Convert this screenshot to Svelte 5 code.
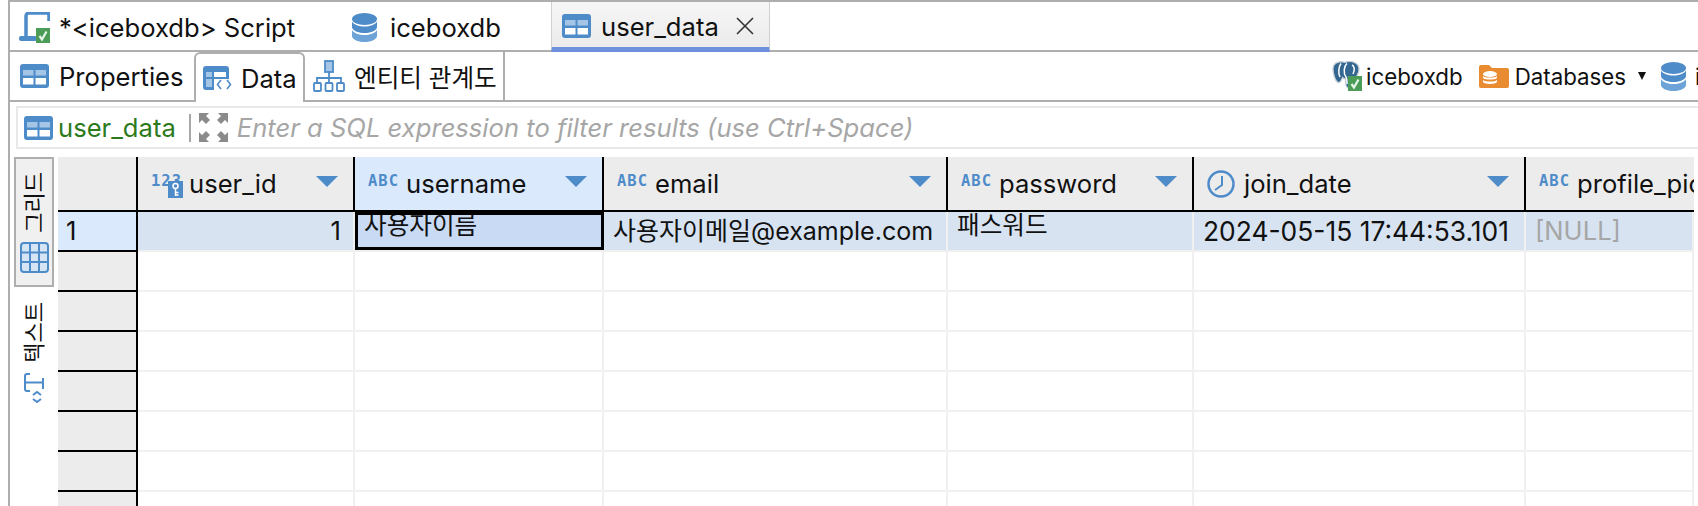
<script>
	const columns = [
		{ name: 'user_id', type: 'num' },
		{ name: 'username', type: 'abc', active: true },
		{ name: 'email', type: 'abc' },
		{ name: 'password', type: 'abc' },
		{ name: 'join_date', type: 'time' },
		{ name: 'profile_picture', type: 'abc', noSort: true }
	];
	const emptyRows = [1, 2, 3, 4, 5, 6, 7];
</script>

{#snippet tableIcon()}
	<svg class="ic-table" viewBox="0 0 29 24">
		<rect width="29" height="24" rx="3" fill="#4e8bc9" />
		<rect x="3" y="6" width="10.5" height="5.5" fill="#a5c5e6" />
		<rect x="15.5" y="6" width="10.5" height="5.5" fill="#a5c5e6" />
		<rect x="3" y="14" width="10.5" height="6.5" fill="#fff" />
		<rect x="15.5" y="14" width="10.5" height="6.5" fill="#fff" />
	</svg>
{/snippet}

{#snippet dbIcon()}
	<svg class="ic-db" viewBox="0 0 25 29">
		<ellipse cx="12.5" cy="6" rx="12.5" ry="6" fill="#4e8bc9" />
		<path d="M0 8.5c2 3.500 7 5 12.500 5s10.500-1.500 12.500-5v5.500c0 3.300-5.600 6-12.500 6S0 17.300 0 14z" fill="#4e8bc9" />
		<path d="M0 17c2 3.500 7 5 12.500 5s10.500-1.500 12.500-5v6c0 3.300-5.600 6-12.500 6S0 26.300 0 23z" fill="#6ea3d8" />
	</svg>
{/snippet}

{#snippet check()}
	<svg class="ic-check" viewBox="0 0 14 15">
		<rect width="14" height="15" fill="#4a9c56" />
		<path d="M3.500 8l2.500 3.500 4.500-8" fill="none" stroke="#e8f5ea" stroke-width="2.200" />
	</svg>
{/snippet}

{#snippet sortArrow()}
	<span class="sort"></span>
{/snippet}

<div class="window">
	<div class="editor-tabs">
		<div class="etab script">
			<span class="icon-wrap">
				<svg class="ic-script" viewBox="0 0 31 30">
					<path d="M7 24V4a3 3 0 0 1 3-3h18a2 2 0 0 1 2 2v6" fill="none" stroke="#4e8bc9" stroke-width="3.500" />
					<rect x="0" y="24" width="18" height="5" rx="2" fill="#4e8bc9" />
				</svg>
				{@render check()}
			</span>
			*&lt;iceboxdb&gt; Script
		</div>
		<div class="etab db">{@render dbIcon()} iceboxdb</div>
		<div class="etab current">
			{@render tableIcon()} user_data
			<svg class="ic-close" viewBox="0 0 18 18">
				<path d="M1 1l16 16M17 1L1 17" stroke="#333" stroke-width="1.600" />
			</svg>
		</div>
	</div>

	<div class="sub-tabs">
		<div class="stab props">{@render tableIcon()} Properties</div>
		<div class="stab data">
			<svg class="ic-table" viewBox="0 0 29 24">
				<rect width="26" height="24" rx="3" fill="#4e8bc9" />
				<rect x="3" y="6" width="6" height="5" fill="#a5c5e6" />
				<rect x="11" y="6" width="12" height="5" fill="#fff" />
				<rect x="3" y="13" width="6" height="8" fill="#a5c5e6" />
				<rect x="11" y="13" width="18" height="11" fill="#fff" />
				<path d="M18 14l-3.500 4.500 3.500 4.500M24 14l3.500 4.500-3.500 4.500" fill="none" stroke="#4e8bc9" stroke-width="1.600" />
			</svg>
			Data
		</div>
		<div class="stab erd">
			<svg class="ic-erd" viewBox="0 0 32 32">
				<g fill="none" stroke="#4e8bc9" stroke-width="1.800">
					<rect x="12" y="1" width="8" height="11" fill="#a5c5e6" />
					<path d="M16 12v6M4 23v-5h24v5M16 18v5" />
					<rect x="1" y="23" width="7" height="8" rx="1" />
					<rect x="12.500" y="23" width="7" height="8" rx="1" />
					<rect x="24" y="23" width="7" height="8" rx="1" />
				</g>
			</svg>
			<span class="erd-label">엔티티 관계도</span>
		</div>
		<div class="crumbs">
			<span class="icon-wrap pg">
				<svg class="ic-pg" viewBox="0 0 28 28">
					<path d="M14 1.500C9 0 1 .5 1 8c0 5 2.500 13 5.500 13.500 2 .3 3-2.500 4-5 1 1 2 1.500 3 1.500l.5 6c.2 3 3 3.500 5 3 2.500-.6 2-4 2-8 3-1.500 6-7 6-11 0-6.500-8-8.500-13-7z" fill="#336791" stroke="#c4ced8" stroke-width="1.300" />
					<path d="M9 2.500C6.500 6 6 12 8 16M15 2.500C12 5 11 12 14 16c1 1.500 1 5 1 7M20 4c2.500 1 3 5 1 9" fill="none" stroke="#fff" stroke-width="1.500" />
				</svg>
				{@render check()}
			</span>
			<span class="crumb-text first">iceboxdb</span>
			<svg class="ic-folder" viewBox="0 0 30 23">
				<path d="M0 2a2 2 0 0 1 2-2h8l3 3h15a2 2 0 0 1 2 2v16a2 2 0 0 1-2 2H2a2 2 0 0 1-2-2z" fill="#e98b30" />
				<ellipse cx="11" cy="9" rx="7" ry="3" fill="#fff" />
				<path d="M4 11c2 2 12 2 14 0v2c-2 2-12 2-14 0zM4 15c2 2 12 2 14 0v2c-1 2.500-13 2.500-14 0z" fill="#fff" />
			</svg>
			<span class="crumb-text">Databases</span>
			<span class="caret"></span>
			{@render dbIcon()}
			<span class="crumb-text last">iceboxdb</span>
		</div>
	</div>

	<div class="filter">
		{@render tableIcon()}
		<span class="filter-table">user_data</span>
		<span class="filter-sep"></span>
		<svg class="ic-expand" viewBox="0 0 29 29">
			<path d="M0 0h10l-3 3 4 4-4 4-4-4-3 3zM29 0H19l3 3-4 4 4 4 4-4 3 3zM0 29h10l-3-3 4-4-4-4-4 4-3-3zM29 29H19l3-3-4-4 4-4 4 4 3-3z" fill="#8b8b8b" />
		</svg>
		<span class="placeholder">Enter a SQL expression to filter results (use Ctrl+Space)</span>
	</div>

	<div class="body">
		<div class="side">
			<div class="side-tab grid-tab">
				<span class="side-label">그리드</span>
				<svg class="ic-grid" viewBox="0 0 29 31">
					<rect x="1" y="1" width="27" height="29" rx="3" fill="#d5e5f5" stroke="#4e8bc9" stroke-width="2" />
					<path d="M10 1v29M19 1v29M1 10.500h27M1 20h27" stroke="#4e8bc9" stroke-width="2" />
				</svg>
			</div>
			<div class="side-tab text-tab">
				<span class="side-label">텍스트</span>
				<svg class="ic-text" viewBox="0 0 21 31">
					<g fill="none" stroke="#4e8bc9" stroke-width="2">
						<path d="M6 1H3a2 2 0 0 0-2 2v13a2 2 0 0 0 2 2h3M1 9.500h18M19 5v11" />
						<path d="M9 22l4-3 4 3M9 26l4 3 4-3" />
					</g>
				</svg>
			</div>
		</div>

		<div class="grid">
			<div class="row head">
				<div class="corner"></div>
				{#each columns as col}
					<div class="hcell" class:active={col.active}>
						{#if col.type === 'abc'}
							<span class="abc">ABC</span>
						{:else if col.type === 'num'}
							<span class="num">123
								<svg class="ic-key" viewBox="0 0 15 17">
									<rect width="15" height="17" fill="#4e8bc9" />
									<circle cx="7.500" cy="5" r="2.500" fill="none" stroke="#fff" stroke-width="1.500" />
									<path d="M7.500 7.500V15M7.500 11.500h3M7.500 14h3" stroke="#fff" stroke-width="1.500" />
								</svg>
							</span>
						{:else}
							<svg class="ic-clock" viewBox="0 0 28 28">
								<circle cx="14" cy="14" r="12.500" fill="none" stroke="#4e8bc9" stroke-width="2.500" />
								<path d="M15 6v9l-7 5" fill="none" stroke="#4e8bc9" stroke-width="2" />
							</svg>
						{/if}
						<span class="hname">{col.name}</span>
						{#if !col.noSort}{@render sortArrow()}{/if}
					</div>
				{/each}
			</div>

			<div class="row data-row">
				<div class="rowhead current-row">1</div>
				<div class="cell num-cell">1</div>
				<div class="cell selected ko">사용자이름</div>
				<div class="cell email">사용자이메일@example.com</div>
				<div class="cell ko">패스워드</div>
				<div class="cell date">2024-05-15 17:44:53.101</div>
				<div class="cell null">[NULL]</div>
			</div>

			{#each emptyRows as r (r)}
				<div class="row empty">
					<div class="rowhead"></div>
					{#each columns as col}
						<div class="cell"></div>
					{/each}
				</div>
			{/each}
		</div>
	</div>
</div>

<style>
	:global(body) {
		margin: 0;
		background: #fff;
	}

	.window {
		width: 1690px;
		height: 506px;
		margin-left: 8px;
		box-sizing: border-box;
		border-left: 2px solid #aeaeae;
		border-top: 2px solid #aeaeae;
		overflow: hidden;
		font-family: 'Inter', 'Noto Sans CJK KR', sans-serif;
		font-size: 25.6px;
		color: #111;
	}

	svg {
		display: block;
		flex: none;
	}

	.ic-table {
		width: 29px;
		height: 24px;
	}

	.ic-db {
		width: 25px;
		height: 29px;
	}

	.icon-wrap {
		position: relative;
		display: block;
		flex: none;
	}

	.ic-check {
		position: absolute;
		right: 0;
		bottom: 0;
		width: 14px;
		height: 15px;
	}

	.editor-tabs {
		display: flex;
		height: 48px;
		border-bottom: 2px solid #aeaeae;
	}

	.etab {
		display: flex;
		align-items: center;
		gap: 10px;
		white-space: nowrap;
		padding-top: 3px;
		box-sizing: border-box;
	}

	.etab.script {
		width: 342px;
		padding-left: 9px;
		gap: 9px;
	}

	.ic-script {
		width: 31px;
		height: 30px;
	}

	.etab.script .icon-wrap {
		width: 31px;
		height: 31px;
	}

	.etab.db {
		width: 199px;
		gap: 13px;
	}

	.etab.current {
		width: 219px;
		padding-left: 10px;
		padding-top: 3px;
		background: linear-gradient(#f6f6f6, #ebebeb);
		border-left: 1px solid #d0d0d0;
		border-right: 1px solid #d0d0d0;
		border-bottom: 5px solid #6e8fdc;
		height: 50px;
	}

	.ic-close {
		width: 18px;
		height: 18px;
		margin-left: 7px;
	}

	.sub-tabs {
		display: flex;
		height: 48px;
		border-bottom: 2px solid #aeaeae;
	}

	.stab {
		display: flex;
		align-items: center;
		gap: 10px;
		white-space: nowrap;
	}

	.stab.props {
		width: 184px;
		box-sizing: border-box;
		padding-left: 10px;
	}

	.stab.data {
		width: 111px;
		height: 50px;
		box-sizing: border-box;
		padding-left: 7px;
		gap: 9px;
		background: #fff;
		border: 2px solid #aeaeae;
		border-bottom: none;
		border-radius: 6px 6px 0 0;
	}

	.stab.erd {
		width: 200px;
		box-sizing: border-box;
		padding-left: 8px;
		gap: 9px;
		border-right: 2px solid #aeaeae;
	}

	.erd-label {
		font-size: 24.6px;
	}

	.ic-erd {
		width: 32px;
		height: 32px;
	}

	.crumbs {
		margin-left: auto;
		width: 366px;
		display: flex;
		align-items: center;
		overflow: hidden;
		white-space: nowrap;
	}

	.pg {
		width: 30px;
		height: 30px;
	}

	.ic-pg {
		width: 28px;
		height: 28px;
	}

	.crumb-text {
		margin-left: 6px;
		font-size: 22.3px;
	}

	.crumb-text.first {
		margin-right: 16px;
		margin-left: 4px;
	}

	.crumb-text.last {
		margin-left: 9px;
	}

	.ic-folder {
		width: 30px;
		height: 23px;
	}

	.caret {
		flex: none;
		margin: 0 15px 0 12px;
		border-top: 8px solid #111;
		border-left: 4.5px solid transparent;
		border-right: 4.5px solid transparent;
	}

	.filter {
		display: flex;
		align-items: center;
		height: 39px;
		margin: 4px 0 0 6px;
		padding-left: 6px;
		border: 2px solid #e8e8e8;
		border-right: none;
	}

	.filter-table {
		color: #2d7a1c;
		margin-left: 5px;
	}

	.filter-sep {
		width: 2px;
		height: 28px;
		margin: 0 8px 0 13px;
		background: #a8a8a8;
	}

	.ic-expand {
		width: 29px;
		height: 29px;
	}

	.placeholder {
		margin-left: 9px;
		color: #a6a6a6;
		font-style: italic;
		white-space: nowrap;
	}

	.body {
		display: flex;
		margin-top: 8px;
	}

	.side {
		width: 48px;
		flex: none;
		padding-left: 4px;
		box-sizing: border-box;
	}

	.side-tab {
		width: 40px;
		box-sizing: border-box;
		display: flex;
		flex-direction: column;
		align-items: center;
	}

	.grid-tab {
		height: 130px;
		background: #f0f0f0;
		border: 2px solid #aeaeae;
		gap: 9px;
		padding-top: 13px;
	}

	.text-tab {
		gap: 10px;
		padding-top: 15px;
	}

	.side-label {
		writing-mode: vertical-rl;
		text-orientation: sideways;
		transform: rotate(180deg);
		font-size: 22px;
		line-height: 26px;
	}

	.ic-grid {
		width: 29px;
		height: 31px;
	}

	.ic-text {
		width: 21px;
		height: 31px;
	}

	.grid {
		flex: 1;
		margin-right: 4px;
		overflow: hidden;
	}

	.row {
		display: grid;
		grid-template-columns: 80px 217px 249px 344px 246px 332px 1fr;
	}

	.head {
		height: 53px;
		background: #ececec;
		border-bottom: 2px solid #000;
	}

	.corner {
		border-right: 2px solid #000;
	}

	.hcell {
		display: flex;
		align-items: center;
		padding: 0 15px 0 13px;
		border-right: 2px solid #000;
		min-width: 0;
		white-space: nowrap;
		overflow: hidden;
	}

	.hcell:last-child {
		border-right: none;
	}

	.hcell.active {
		background: #dbe9fc;
	}

	.abc,
	.num {
		position: relative;
		flex: none;
		width: 32px;
		color: #4e8bc9;
		font: 700 15.5px 'DejaVu Sans Mono', monospace;
		letter-spacing: 1px;
		margin: -5px 6px 0 0;
	}

	.ic-key {
		position: absolute;
		right: 0;
		top: 9px;
		width: 15px;
		height: 17px;
	}

	.ic-clock {
		width: 28px;
		height: 28px;
		margin-right: 9px;
	}

	.hname {
		flex: 1;
	}

	.sort {
		flex: none;
		border-top: 11px solid #4e8bc9;
		border-left: 11px solid transparent;
		border-right: 11px solid transparent;
		margin-top: -5px;
	}

	.data-row {
		height: 38px;
		background: #d7e3f1;
	}

	.empty {
		height: 38px;
		border-top: 2px solid #f0f0f0;
	}

	.rowhead {
		background: #ececec;
		border-right: 2px solid #000;
		border-top: 2px solid #000;
		margin-top: -2px;
		height: 40px;
		box-sizing: border-box;
		padding-left: 8px;
	}

	.rowhead.current-row {
		background: #dbe9fc;
		border-top: none;
		margin-top: 0;
		height: 38px;
		line-height: 38px;
	}

	.cell {
		border-right: 2px solid #f0f0f0;
		padding: 0 9px;
		line-height: 38px;
		white-space: nowrap;
		overflow: hidden;
	}

	.num-cell {
		text-align: right;
		padding-right: 12px;
	}

	.ko {
		font-size: 24.6px;
		line-height: 26px;
	}

	.email {
		font-size: 25px;
	}

	.date {
		font-size: 26.4px;
	}

	.cell.selected {
		background: #c9dbf4;
		border: 3px solid #000;
		padding: 0 6px;
		line-height: 20px;
	}

	.null {
		color: #a6a6a6;
	}
</style>
